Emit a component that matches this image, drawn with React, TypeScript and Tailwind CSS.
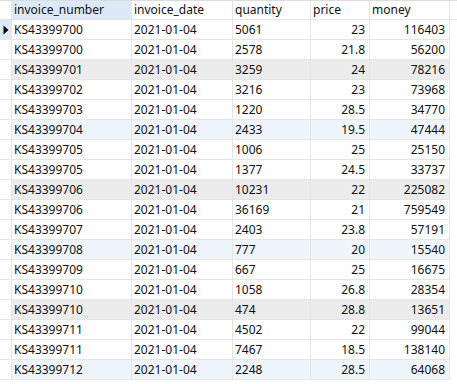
import React from "react";

const rows: [string, string, string, string, string, string][] = [
  ["KS43399700", "2021-01-04", "5061", "23", "116403", "w"],
  ["KS43399700", "2021-01-04", "2578", "21.8", "56200", "w"],
  ["KS43399701", "2021-01-04", "3259", "24", "78216", "g"],
  ["KS43399702", "2021-01-04", "3216", "23", "73968", "w"],
  ["KS43399703", "2021-01-04", "1220", "28.5", "34770", "w"],
  ["KS43399704", "2021-01-04", "2433", "19.5", "47444", "b"],
  ["KS43399705", "2021-01-04", "1006", "25", "25150", "w"],
  ["KS43399705", "2021-01-04", "1377", "24.5", "33737", "w"],
  ["KS43399706", "2021-01-04", "10231", "22", "225082", "g"],
  ["KS43399706", "2021-01-04", "36169", "21", "759549", "w"],
  ["KS43399707", "2021-01-04", "2403", "23.8", "57191", "w"],
  ["KS43399708", "2021-01-04", "777", "20", "15540", "b"],
  ["KS43399709", "2021-01-04", "667", "25", "16675", "w"],
  ["KS43399710", "2021-01-04", "1058", "26.8", "28354", "w"],
  ["KS43399710", "2021-01-04", "474", "28.8", "13651", "g"],
  ["KS43399711", "2021-01-04", "4502", "22", "99044", "w"],
  ["KS43399711", "2021-01-04", "7467", "18.5", "138140", "w"],
  ["KS43399712", "2021-01-04", "2248", "28.5", "64068", "b"],
];

const cell = "h-5 border-r border-b border-[#e5e5e5] flex items-center overflow-hidden whitespace-nowrap";

export default function App() {
  return (
    <div
      className="w-[457px] h-[384px] bg-white text-[12px] text-[#111] overflow-hidden"
      style={{ fontFamily: '"Noto Sans", "Open Sans", sans-serif' }}
    >
      <div className="border-t border-[#dcdcdc]">
        <div className="grid grid-cols-[12px_120px_101px_78px_59px_80px_1fr]">
          <div className={`${cell} h-[19px] bg-white`} />
          <div className={`${cell} h-[19px] bg-[#dce9f8] pl-[2px]`}>invoice_number</div>
          <div className={`${cell} h-[19px] bg-white pl-[2px]`}>invoice_date</div>
          <div className={`${cell} h-[19px] bg-white pl-[2px]`}>quantity</div>
          <div className={`${cell} h-[19px] bg-white pl-[2px]`}>price</div>
          <div className={`${cell} h-[19px] bg-white pl-[2px]`}>money</div>
          <div className="h-[19px] border-b border-[#e5e5e5] bg-white" />
        </div>
        {rows.map((r, i) => {
          const bg = r[5] === "g" ? "bg-[#ececec]" : r[5] === "b" ? "bg-[#eef5fd]" : "bg-white";
          return (
            <div key={i} className="grid grid-cols-[12px_120px_101px_78px_59px_80px_1fr]">
              <div className={`${cell} ${i === 0 ? "bg-[#dce9f8]" : "bg-white"} justify-center`}>
                {i === 0 && (
                  <svg width="6" height="10" viewBox="0 0 6 10">
                    <path d="M0.5 0.5 L5.5 5 L0.5 9.5 Z" fill="#000" />
                  </svg>
                )}
              </div>
              <div className={`${cell} ${bg} pl-[2px]`}>{r[0]}</div>
              <div className={`${cell} ${bg} pl-[2px]`}>{r[1]}</div>
              <div className={`${cell} ${bg} pl-[2px]`}>{r[2]}</div>
              <div className={`${cell} ${bg} justify-end pr-[4px]`}>{r[3]}</div>
              <div className={`${cell} ${bg} justify-end pr-[4px]`}>{r[4]}</div>
              <div className="h-5 bg-white" />
            </div>
          );
        })}
      </div>
    </div>
  );
}
